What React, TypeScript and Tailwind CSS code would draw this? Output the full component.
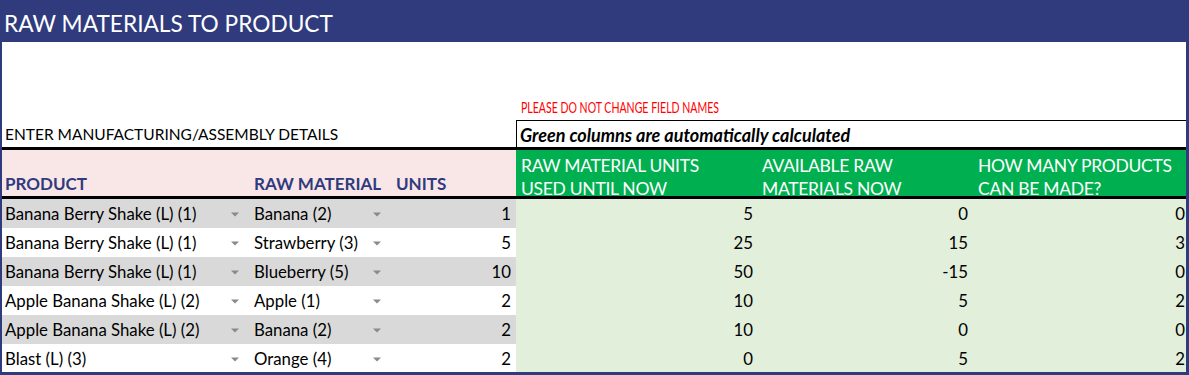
import React from 'react';

type Row = {
  product: string;
  material: string;
  units: number;
  used: number;
  available: number;
  canMake: number;
};

const rows: Row[] = [
  { product: 'Banana Berry Shake (L) (1)', material: 'Banana (2)', units: 1, used: 5, available: 0, canMake: 0 },
  { product: 'Banana Berry Shake (L) (1)', material: 'Strawberry (3)', units: 5, used: 25, available: 15, canMake: 3 },
  { product: 'Banana Berry Shake (L) (1)', material: 'Blueberry (5)', units: 10, used: 50, available: -15, canMake: 0 },
  { product: 'Apple Banana Shake (L) (2)', material: 'Apple (1)', units: 2, used: 10, available: 5, canMake: 2 },
  { product: 'Apple Banana Shake (L) (2)', material: 'Banana (2)', units: 2, used: 10, available: 0, canMake: 0 },
  { product: 'Blast (L) (3)', material: 'Orange (4)', units: 2, used: 0, available: 5, canMake: 2 },
];

const cols = 'grid grid-cols-[248px_142px_124px_241px_216px_213px]';

function Arrow() {
  return (
    <svg width="8" height="5" viewBox="0 0 8 5" className="shrink-0">
      <path d="M0 0.5 L8 0.5 L4 4.5 Z" fill="#8a8a8a" />
    </svg>
  );
}

export default function App() {
  return (
    <div className="w-[1189px] h-[375px] bg-[#2f3b7d] font-[Lato,sans-serif] text-black overflow-hidden">
      {/* Title bar */}
      <div className="h-[42px] flex items-end pl-[4px] pb-[6px]">
        <h1 className="text-[22.7px] leading-none text-white">RAW MATERIALS TO PRODUCT</h1>
      </div>

      <div className="ml-[2px] w-[1184px] h-[330px] bg-white flex flex-col">
        {/* Note row */}
        <div className={`${cols} h-[78px]`}>
          <div className="col-span-3" />
          <div className="col-span-3 flex items-end pl-[5px] pb-[5px]">
            <span className="text-[15.5px] leading-none text-[#ff0000] inline-block origin-left scale-x-[0.68] whitespace-nowrap">
              PLEASE DO NOT CHANGE FIELD NAMES
            </span>
          </div>
        </div>

        {/* Section label row */}
        <div className={`${cols} h-[27px]`}>
          <div className="col-span-3 flex items-center pl-[3px] pt-[2px]">
            <span className="text-[15.5px] leading-none whitespace-nowrap">ENTER MANUFACTURING/ASSEMBLY DETAILS</span>
          </div>
          <div className="col-span-3 border-t border-l border-black flex items-center pl-[3px] pt-[1px]">
            <span className="text-[18px] leading-none font-bold italic">Green columns are automatically calculated</span>
          </div>
        </div>

        <div className="h-[3px] bg-black" />

        {/* Header row */}
        <div className={`${cols} h-[46px] font-bold`}>
          <div className="bg-[#f9e6e7] flex items-end pl-[3px] pb-[8px] text-[17px] leading-none text-[#2f3b7d]">PRODUCT</div>
          <div className="bg-[#f9e6e7] flex items-end pl-[4px] pb-[8px] text-[17px] leading-none text-[#2f3b7d]">RAW MATERIAL</div>
          <div className="bg-[#f9e6e7] flex items-end pl-[4px] pb-[8px] text-[17px] leading-none text-[#2f3b7d]">UNITS</div>
          {[
            ['RAW MATERIAL UNITS', 'USED UNTIL NOW'],
            ['AVAILABLE RAW', 'MATERIALS NOW'],
            ['HOW MANY PRODUCTS', 'CAN BE MADE?'],
          ].map((h, i) => (
            <div key={i} className="bg-[#00b050] pl-[5px] pt-[4px] text-white font-normal text-[17.5px] leading-[23px] tracking-[-0.3px] whitespace-nowrap">
              <div>{h[0]}</div>
              <div>{h[1]}</div>
            </div>
          ))}
        </div>

        <div className="h-[3px] bg-black" />

        {/* Data rows */}
        {rows.map((r, i) => {
          const shade = i % 2 === 0 ? 'bg-[#d9d9d9]' : 'bg-white';
          return (
            <div key={i} className={`${cols} ${i === 5 ? 'h-[28px]' : 'h-[29px]'} text-[16.8px] leading-none`}>
              <div className={`${shade} flex items-center justify-between pl-[3px] pr-[11px] pt-[2px]`}>
                <span>{r.product}</span>
                <Arrow />
              </div>
              <div className={`${shade} flex items-center justify-between pl-[4px] pr-[11px] pt-[2px]`}>
                <span>{r.material}</span>
                <Arrow />
              </div>
              <div className={`${shade} flex items-center justify-end pr-[5px] pt-[2px]`}>{r.units}</div>
              <div className="bg-[#e2efda] flex items-center justify-end pr-[4px] pt-[2px]">{r.used}</div>
              <div className="bg-[#e2efda] flex items-center justify-end pr-[5px] pt-[2px]">{r.available}</div>
              <div className="bg-[#e2efda] flex items-center justify-end pr-[1px] pt-[2px]">{r.canMake}</div>
            </div>
          );
        })}
      </div>
    </div>
  );
}
